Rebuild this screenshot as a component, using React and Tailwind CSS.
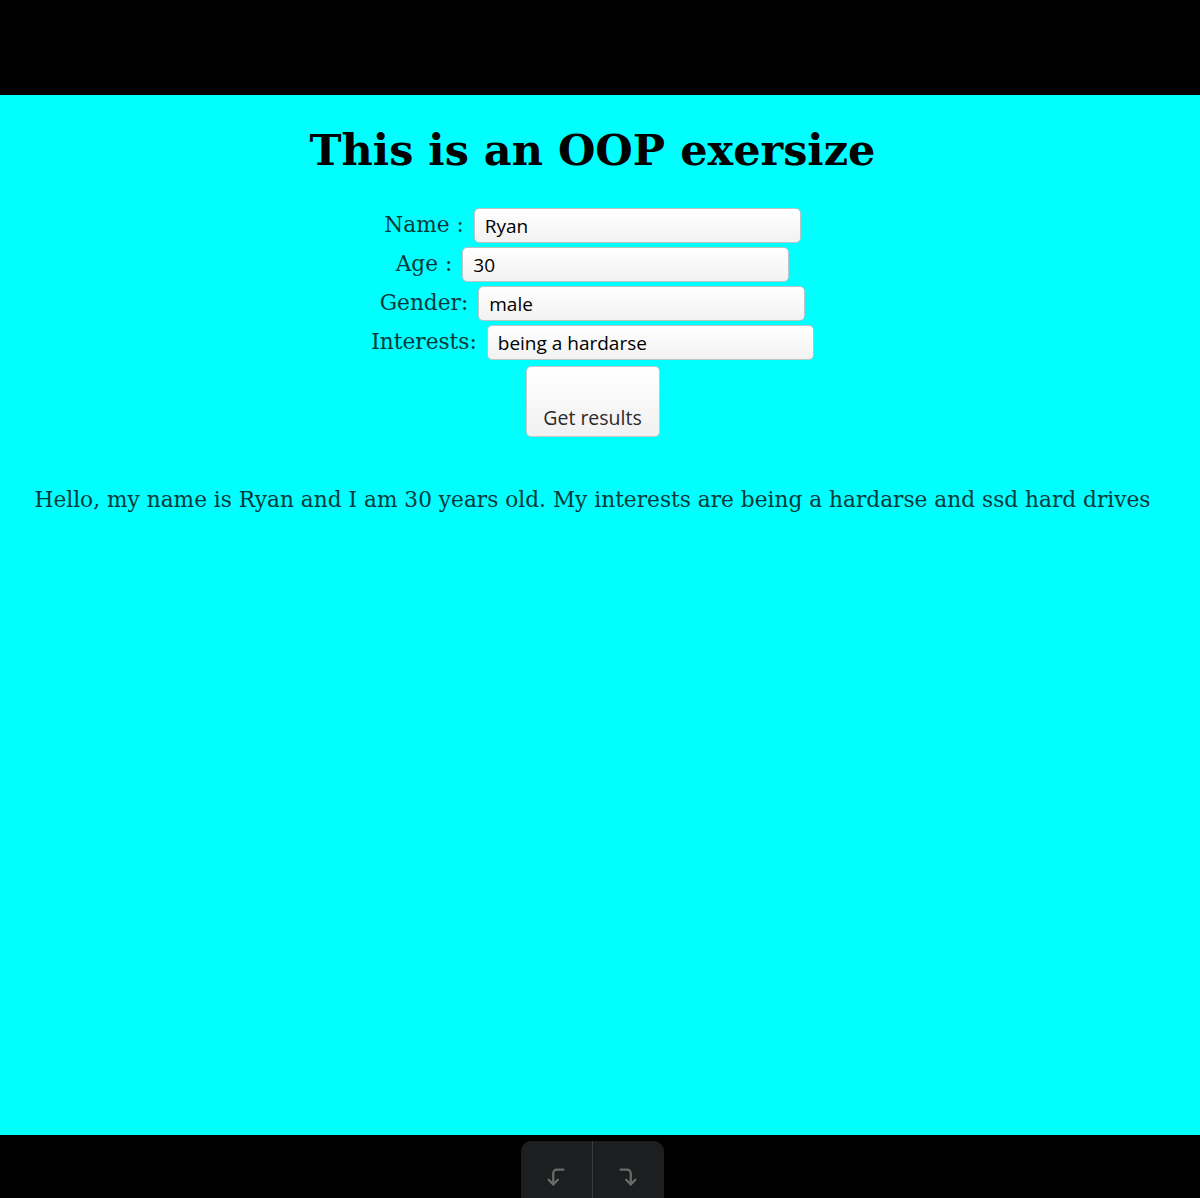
import { CornerLeftDown, CornerRightDown } from "lucide-react";

const fields = [
  { label: "Name :", value: "Ryan" },
  { label: "Age :", value: "30" },
  { label: "Gender:", value: "male" },
  { label: "Interests:", value: "being a hardarse" },
];

export default function App() {
  return (
    <div className="flex h-[1198px] w-[1200px] flex-col overflow-hidden bg-black">
      <div className="h-[95px] shrink-0 bg-black" />

      <main className="h-[1040px] shrink-0 bg-[#00ffff] pr-[15px] font-['DejaVu_Serif',serif] text-black">
        <h1 className="pt-[27px] text-center text-[43px] leading-[56px] font-bold">
          This is an OOP exersize
        </h1>

        <div className="mt-[30px] flex flex-col items-center gap-[4px]">
          {fields.map((f) => (
            <div key={f.label} className="flex items-center gap-[10px]">
              <span className="text-[21.7px] text-[#053a3a]">{f.label}</span>
              <input
                readOnly
                value={f.value}
                className="h-[35px] w-[327px] rounded-[5px] border border-[#b9c4c4] bg-gradient-to-b from-[#ffffff] to-[#f2f2f2] px-[10px] font-['Open_Sans',sans-serif] text-[19px] text-black outline-none"
              />
            </div>
          ))}
          <button className="mt-[2px] flex h-[71px] w-[134px] items-end justify-center rounded-[5px] border border-[#c4caca] bg-gradient-to-b from-[#ffffff] to-[#f1f1f1] pb-[4px] font-['Open_Sans',sans-serif] text-[19.5px] text-[#2a2a2a]">
            Get results
          </button>
        </div>

        <p className="mt-[47px] text-center text-[21.7px] text-[#063a3a]">
          Hello, my name is Ryan and I am 30 years old. My interests are being a hardarse and ssd hard drives
        </p>
      </main>

      <footer className="flex h-[63px] shrink-0 justify-center bg-black pt-[6px]">
        <div className="ml-[-16px] flex h-full w-[143px] rounded-t-[10px] bg-[#1d1e1f]">
          <div className="flex flex-1 items-center justify-center border-r border-[#3a3b3c] pt-[15px]">
            <CornerLeftDown size={22} strokeWidth={2.5} color="#6a6b6b" />
          </div>
          <div className="flex flex-1 items-center justify-center pt-[15px]">
            <CornerRightDown size={22} strokeWidth={2.5} color="#6a6b6b" />
          </div>
        </div>
      </footer>
    </div>
  );
}
